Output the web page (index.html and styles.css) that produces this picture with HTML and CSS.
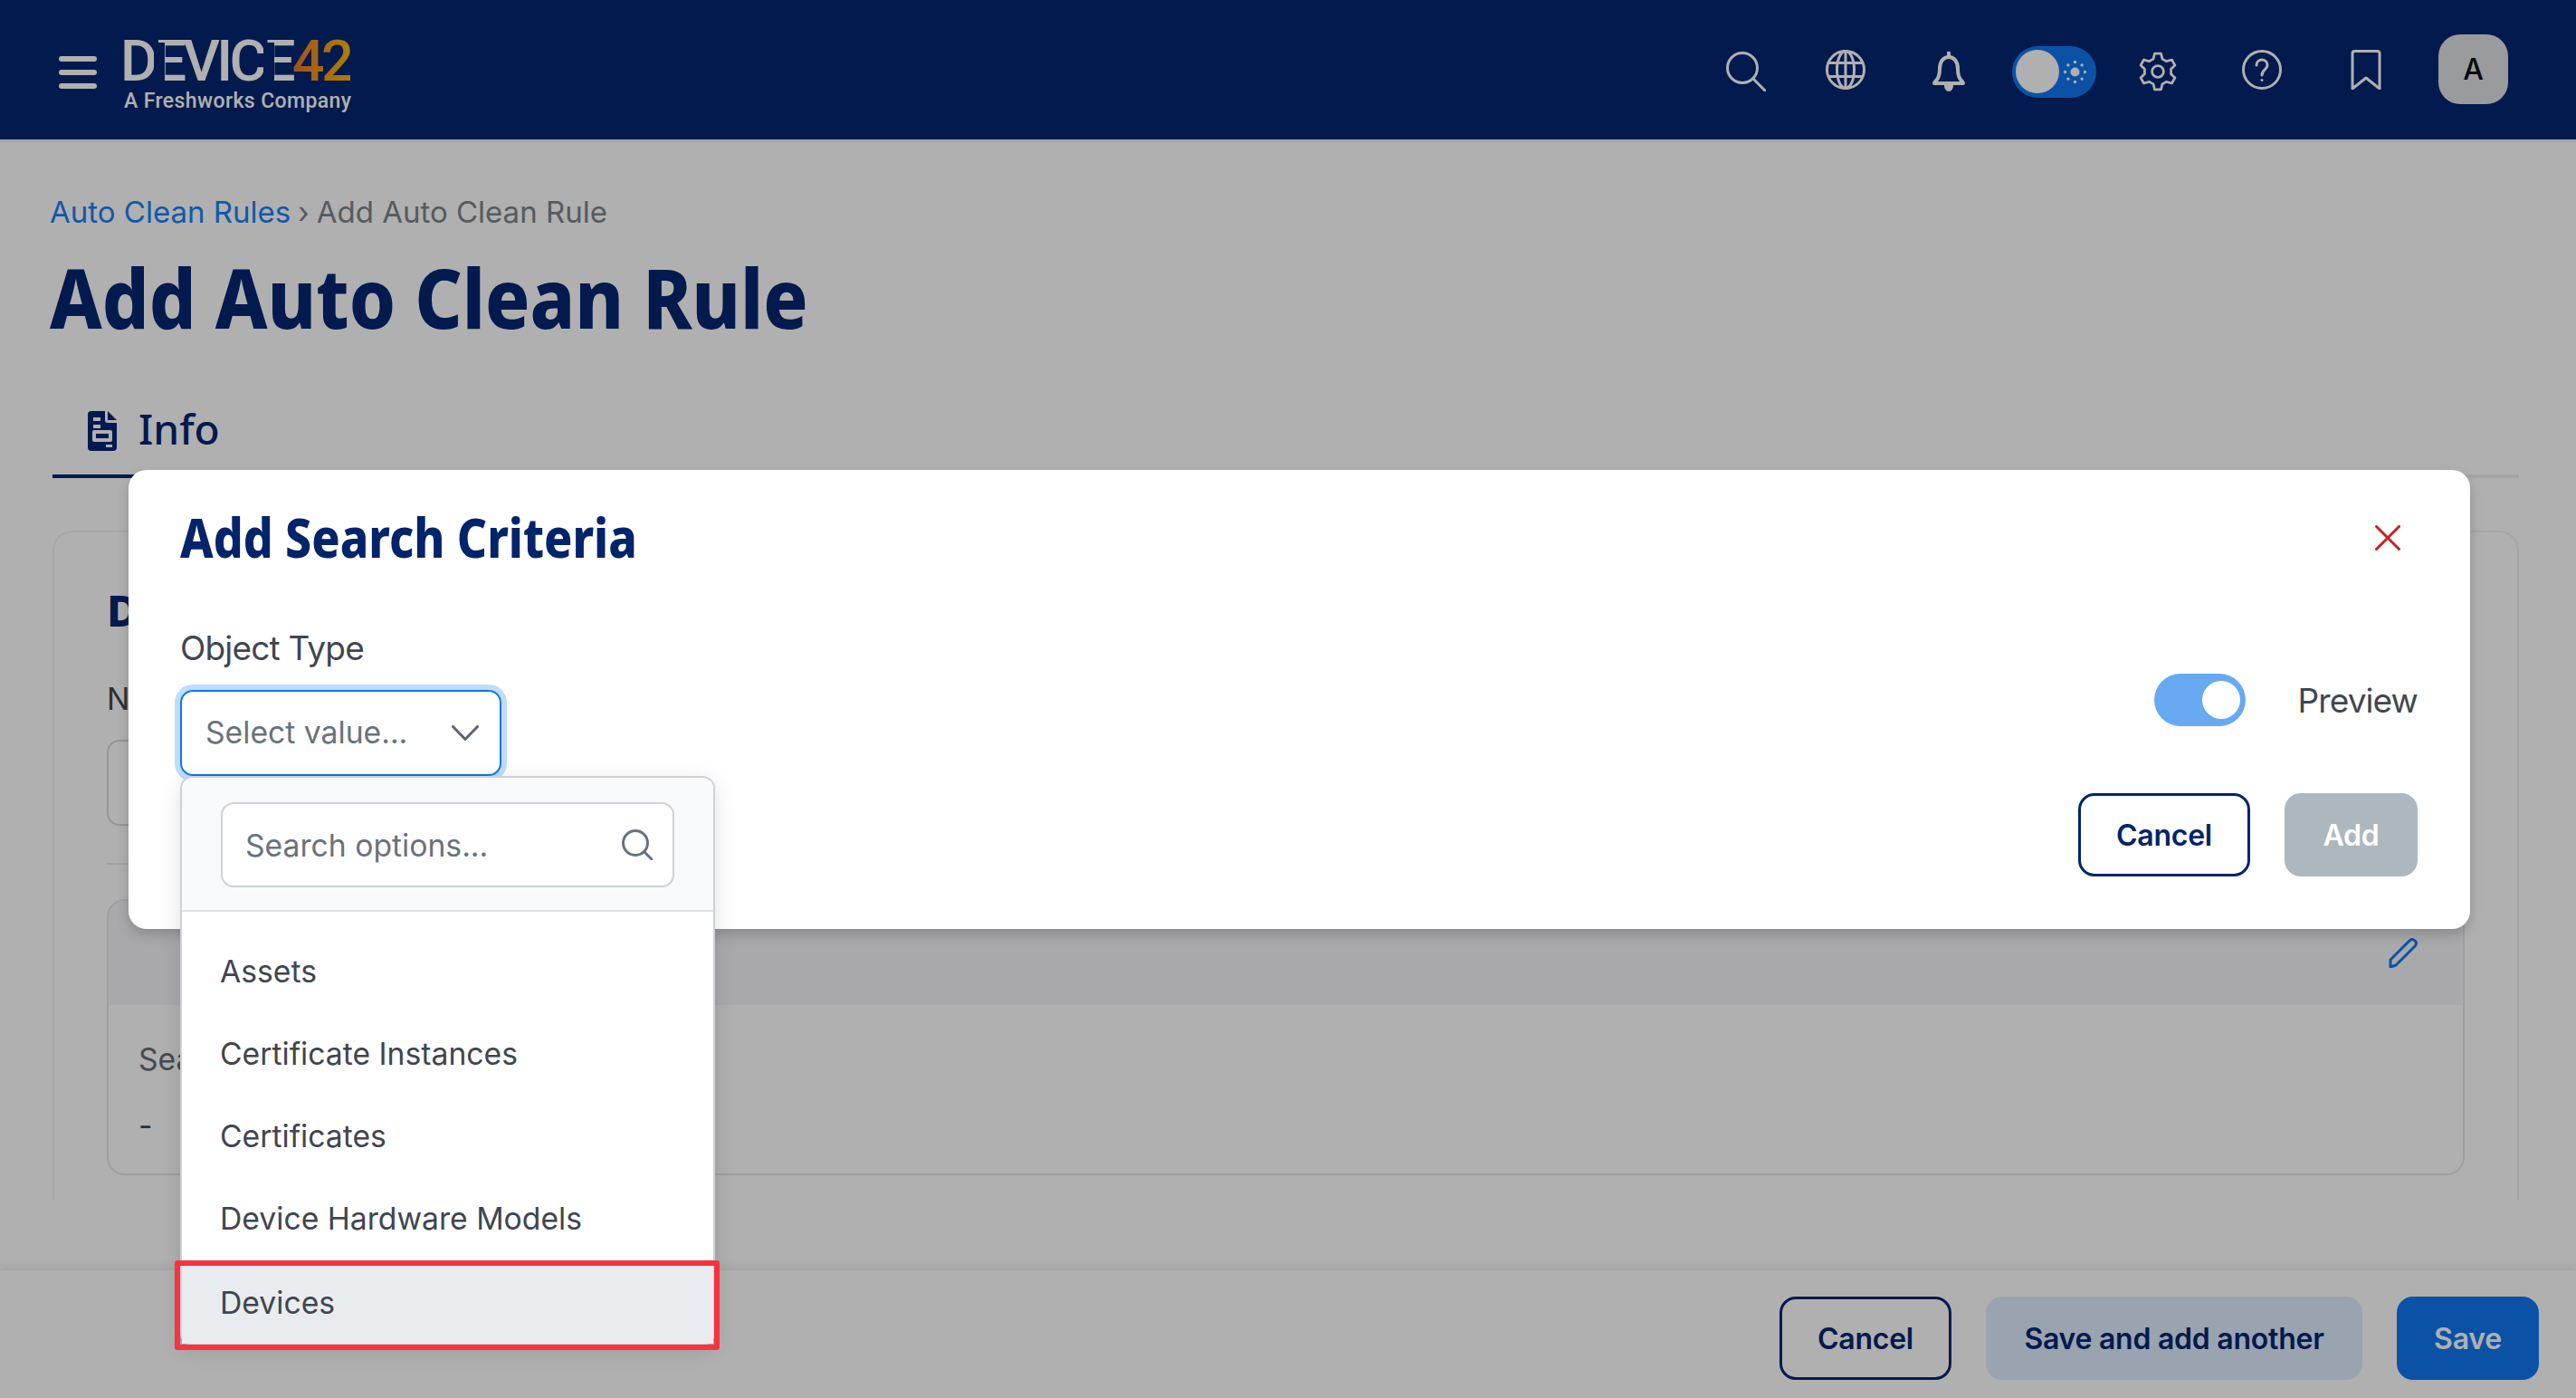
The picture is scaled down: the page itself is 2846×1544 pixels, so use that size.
FILE: index.html
```html
<!DOCTYPE html>
<html lang="en">
<head>
<meta charset="utf-8">
<title>Add Auto Clean Rule</title>
<link rel="stylesheet" href="styles.css">
</head>
<body>
<div class="app">
  <header class="topbar">
    <div class="brand">
      <div class="burger"><span></span><span></span><span></span></div>
      <div class="logo">
        <div class="wordmark">D<span class="bar-e">E</span>VIC<span class="bar-e">E</span><span class="num">42</span></div>
        <div class="tagline">A Freshworks Company</div>
      </div>
    </div>
    <nav class="tools">
      <svg class="ic ic-search" viewBox="0 0 44 44"><circle cx="18" cy="18" r="16.5"/><path d="M30 30 43 43"/></svg>
      <svg class="ic ic-globe" viewBox="0 0 44 44"><circle cx="22" cy="22" r="20.5"/><ellipse cx="22" cy="22" rx="9.5" ry="20.5"/><path d="M4 14.500H40M4 29.500H40M22 1.500V42.500"/></svg>
      <svg class="ic ic-bell" viewBox="0 0 40 44"><path d="M20 1v5M6 32c3-3 4-6 4-13 0-8 4-13 10-13s10 5 10 13c0 7 1 10 4 13 1 1 2 2 2 3H4c0-1 1-2 2-3Z"/><path class="solid" d="M15 37h10c0 4-2 7-5 7s-5-3-5-7Z"/></svg>
      <div class="theme">
        <span class="theme-knob"></span>
        <svg class="theme-sun" viewBox="0 0 32 32"><circle cx="16" cy="16" r="6"/><circle cx="16" cy="3" r="2"/><circle cx="16" cy="29" r="2"/><circle cx="3" cy="16" r="2"/><circle cx="29" cy="16" r="2"/><circle cx="7" cy="7" r="2"/><circle cx="25" cy="7" r="2"/><circle cx="7" cy="25" r="2"/><circle cx="25" cy="25" r="2"/></svg>
      </div>
      <svg class="ic ic-gear" viewBox="0 0 48 48"><path d="M18.530 8.960 20.180 2.330H27.820L29.470 8.960A16 16 0 0 1 34.280 11.740L40.850 9.860 44.670 16.480 39.760 21.220A16 16 0 0 1 39.760 26.780L44.670 31.520 40.850 38.140 34.280 36.260A16 16 0 0 1 29.470 39.040L27.820 45.670H20.180L18.530 39.040A16 16 0 0 1 13.720 36.260L7.150 38.140 3.330 31.520 8.240 26.780A16 16 0 0 1 8.240 21.220L3.330 16.480 7.150 9.860 13.720 11.740A16 16 0 0 1 18.530 8.960Z"/><circle cx="24" cy="24" r="7"/></svg>
      <svg class="ic ic-help" viewBox="0 0 44 44"><circle cx="22" cy="22" r="20.500"/><path d="M16 17c0-4 3-6 6-6s6 2 6 6c0 5-6 5-6 11"/><circle class="solid" cx="22" cy="33.500" r="1.500"/></svg>
      <svg class="ic ic-mark" viewBox="0 0 34 44"><path d="M2 43V4c0-1.500 1-2.500 2.500-2.500h25C31 1.500 32 2.500 32 4v39L17 31Z"/></svg>
      <div class="avatar">A</div>
    </nav>
  </header>

  <main class="content">
    <div class="crumbs"><a class="crumb-link">Auto Clean Rules</a> <span class="crumb-sep">›</span> <span>Add Auto Clean Rule</span></div>
    <h1 class="page-title">Add Auto Clean Rule</h1>
    <div class="tabs">
      <div class="tab">
        <svg class="tab-icon" viewBox="0 0 32 44"><path fill-rule="evenodd" d="M4 0H19V10a3 3 0 0 0 3 3H32V40a4 4 0 0 1-4 4H4a4 4 0 0 1-4-4V4a4 4 0 0 1 4-4ZM6 7V11H14V7ZM6 15V19H14V15ZM7 21a2 2 0 0 0-2 2V32a2 2 0 0 0 2 2H25a2 2 0 0 0 2-2V23a2 2 0 0 0-2-2ZM9 25H23V30H9ZM20 37V40H27V37ZM22 0 32 10H22Z"/></svg>
        <span class="tab-label">Info</span>
      </div>
    </div>
    <section class="card">
      <h2 class="card-title">Details</h2>
      <div class="field-label">Name</div>
      <div class="field-input"></div>
      <div class="card-rule"></div>
      <div class="criteria">
        <div class="criteria-band">
          <svg class="pencil" viewBox="0 0 32 33"><path d="M2 24 23 3c2-2 4-2 6 0s2 4 0 6L8 30l-6 2Z"/></svg>
        </div>
        <div class="criteria-body">
          <div class="criteria-label">Search Criteria</div>
          <div class="criteria-value">-</div>
        </div>
      </div>
    </section>
  </main>

  <footer class="footer">
    <button class="btn btn-outline-dim">Cancel</button>
    <button class="btn btn-soft">Save and add another</button>
    <button class="btn btn-primary">Save</button>
  </footer>

  <div class="scrim"></div>

  <div class="modal">
    <div class="modal-head">
      <h2 class="modal-title">Add Search Criteria</h2>
      <svg class="modal-close" viewBox="0 0 28 28"><path d="M1.500 1.500 26.500 26.500M26.500 1.500 1.500 26.500"/></svg>
    </div>
    <div class="modal-body">
      <div class="picker">
        <div class="picker-label">Object Type</div>
        <div class="select">
          <span class="select-value">Select value...</span>
          <svg class="chev" viewBox="0 0 30 17"><path d="M1.500 1.500 15 15.500 28.500 1.500"/></svg>
          <div class="dropdown">
            <div class="dd-head">
              <div class="dd-search">
                <span>Search options...</span>
                <svg class="dd-search-icon" viewBox="0 0 34 34"><circle cx="15" cy="15" r="13.500"/><path d="M25 25 33 33"/></svg>
              </div>
            </div>
            <ul class="dd-list">
              <li class="dd-item">Assets</li>
              <li class="dd-item">Certificate Instances</li>
              <li class="dd-item">Certificates</li>
              <li class="dd-item">Device Hardware Models</li>
              <li class="dd-item dd-item-active">Devices</li>
            </ul>
          </div>
        </div>
      </div>
      <div class="modal-side">
        <div class="preview">
          <span class="switch"><span class="switch-knob"></span></span>
          <span class="preview-label">Preview</span>
        </div>
        <div class="modal-actions">
          <button class="btn btn-outline">Cancel</button>
          <button class="btn btn-disabled">Add</button>
        </div>
      </div>
    </div>
  </div>
</div>
</body>
</html>
```
FILE: styles.css
```css
* { box-sizing: border-box; }
html, body { margin: 0; padding: 0; height: 100%; }
body { font-family: "Inter", "Liberation Sans", sans-serif; color: #3f4650; background: #fff; }
.app { position: relative; height: 1544px; display: flex; flex-direction: column; overflow: hidden; }

/* top bar */
.topbar { height: 157px; flex: none; background: #042670; display: flex; align-items: center; justify-content: space-between; padding: 0 75px 0 65px; border-bottom: 3px solid #f0f0f6; }
.brand { display: flex; align-items: flex-start; gap: 30px; }
.burger { display: flex; flex-direction: column; gap: 9px; width: 42px; margin-top: 33px; }
.burger span { height: 6px; border-radius: 3px; background: #fff; }
.logo { width: 252px; color: #fff; margin-top: 10px; margin-left: -4px; }
.wordmark { font-family: "Roboto", sans-serif; font-weight: 500; font-size: 63px; line-height: 58px; letter-spacing: -3.7px; white-space: nowrap; }
.bar-e { position: relative; display: inline-block; }
.bar-e::before { content: ""; position: absolute; left: 0; top: 8px; bottom: 8px; width: 12px; background: #042670; }
.num { background: linear-gradient(90deg, #e9762a, #f6b910); -webkit-background-clip: text; background-clip: text; color: transparent; }
.tagline { font-family: "Roboto", sans-serif; font-size: 23px; line-height: 26px; letter-spacing: .4px; font-weight: 500; white-space: nowrap; margin: 2px 0 0 4px; }
.tools { display: flex; align-items: center; margin-top: 4px; }
.ic { display: block; fill: none; stroke: #fff; stroke-width: 3; stroke-linecap: round; stroke-linejoin: round; }
.ic .solid { fill: #fff; stroke: none; }
.ic-search { width: 44px; height: 44px; margin-right: 66px; }
.ic-globe { width: 44px; height: 44px; margin-right: 72px; margin-top: -4px; }
.ic-bell { width: 40px; height: 44px; margin-right: 50px; stroke-width: 4; }
.theme { position: relative; width: 93px; height: 57px; border-radius: 29px; background: #1077f1; margin-right: 46px; }
.theme-knob { position: absolute; left: 4px; top: 4px; width: 48px; height: 48px; border-radius: 50%; background: #fff; }
.theme-sun { position: absolute; left: 56px; top: 15px; width: 27px; height: 27px; fill: #fff; }
.ic-gear { width: 44px; height: 44px; margin-right: 71px; }
.ic-help { width: 44px; height: 44px; margin-right: 76px; margin-top: -4px; }
.ic-mark { width: 34px; height: 44px; margin-right: 63px; margin-top: -4px; }
.avatar { width: 77px; height: 77px; border-radius: 24px; background: #dfe1e2; color: #111; display: flex; align-items: center; justify-content: center; font-size: 32px; font-weight: 500; margin-top: -6px; }

/* page */
.content { flex: 1; min-height: 0; display: flex; flex-direction: column; padding: 55px 63px 78px 58px; }
.crumbs { font-size: 33px; line-height: 44px; margin-left: -3px; color: #7b858d; white-space: nowrap; }
.crumb-link { color: #1a80f5; }
.crumb-sep { color: #7b858d; margin: 0 -1.4px; }
.page-title { margin: 17px 0 0 -3px; font-family: "Noto Sans", sans-serif; font-weight: 800; font-size: 91px; line-height: 110px; color: #042670; white-space: nowrap; transform: scaleX(.896); transform-origin: left center; }
.tabs { margin-top: 50px; height: 95px; border-bottom: 4px solid #eef0f3; display: flex; flex: none; }
.tab { display: flex; align-items: center; gap: 24px; padding: 0 39px 6px; height: 95px; border-bottom: 4px solid #042670; font-family: "Noto Sans", sans-serif; font-size: 46px; font-weight: 500; color: #042670; }
.tab-label { margin-bottom: 6px; }
.tab-icon { width: 32px; height: 44px; fill: #042670; }
.card { flex: 1; min-height: 0; margin-top: 58px; border: 2px solid #f0f1f4; border-bottom: 0; border-radius: 22px 22px 0 0; padding: 62px 58px 0 58px; }
.card-title { margin: 0; font-family: "Noto Sans", sans-serif; font-weight: 800; font-size: 48px; line-height: 48px; color: #042670; }
.field-label { margin-top: 52px; font-size: 33.7px; line-height: 44px; }
.field-input { margin-top: 23px; height: 95px; width: 1000px; border: 2px solid #d7dade; border-radius: 14px; }
.card-rule { margin-top: 41px; height: 2px; background: #e9ebee; }
.criteria { margin-top: 38px; height: 305px; border: 2px solid #e6e7ea; border-radius: 20px; overflow: hidden; }
.criteria-band { height: 115px; background: #f5f5f8; display: flex; justify-content: flex-end; align-items: flex-start; padding: 41px 50px 0 0; }
.pencil { width: 32px; height: 33px; fill: none; stroke: #1077f1; stroke-width: 3; stroke-linejoin: round; }
.criteria-body { padding: 38px 33px; font-size: 33.7px; }
.criteria-label { line-height: 44px; color: #636c75; }
.criteria-value { margin-top: 29px; line-height: 44px; }

/* footer */
.footer { height: 141px; flex: none; display: flex; justify-content: flex-end; gap: 38px; padding: 29px 41px 0 0; box-shadow: 0 -4px 8px rgba(20, 30, 60, .09); background: #fff; position: relative; }
.btn { font-family: "Inter", sans-serif; font-weight: 600; font-size: 32px; letter-spacing: -.25px; height: 92px; border-radius: 18px; border: 0; padding: 0; display: block; }
.footer .btn-outline-dim { width: 190px; background: #fff; border: 3px solid #042670; color: #042670; }
.btn-soft { width: 416px; background: #dfeeff; color: #042670; }
.btn-primary { width: 157px; background: #1077f1; color: #fff; }

/* overlay */
.scrim { position: absolute; inset: 0; background: rgba(0, 0, 0, .31); }
.modal { position: absolute; left: 142px; top: 519px; width: 2587px; height: 507px; background: #fff; border-radius: 20px; box-shadow: 0 6px 14px rgba(0, 0, 0, .18); padding: 44px 58px 0 57px; }
.modal-head { display: flex; justify-content: space-between; align-items: center; height: 60px; }
.modal-title { margin: 0; font-family: "Noto Sans", sans-serif; font-weight: 800; font-size: 60px; line-height: 60px; color: #01246b; white-space: nowrap; transform: scaleX(.863); transform-origin: left center; }
.modal-close { width: 28px; height: 28px; margin: 2px 19px 0 0; fill: none; stroke: #cc1f1f; stroke-width: 3; stroke-linecap: round; }
.modal-body { margin-top: 71px; display: flex; justify-content: space-between; }
.picker-label { font-size: 37px; line-height: 44px; letter-spacing: -.8px; color: #3f4650; }
.select { position: relative; margin-top: 24px; width: 355px; height: 95px; border: 2px solid #0a78e6; border-radius: 14px; box-shadow: 0 0 0 6px #bfdcfd; display: flex; align-items: center; justify-content: space-between; padding: 0 23px 0 26px; font-size: 33.7px; color: #68727c; }
.select-value { margin-top: -2px; }
.chev { width: 30px; height: 17px; fill: none; stroke: #5b6570; stroke-width: 3; stroke-linecap: round; stroke-linejoin: round; }
.dropdown { position: absolute; left: -2px; top: 93px; width: 591px; height: 629px; background: #fff; border: 2px solid #ccd2d8; border-radius: 14px; box-shadow: 0 6px 24px rgba(0, 0, 0, .12); z-index: 2; }
.dd-head { height: 148px; background: #f8f9fa; border-bottom: 2px solid #dee2e6; padding: 27px 43px; border-radius: 12px 12px 0 0; }
.dd-search { height: 94px; background: #fff; border: 2px solid #ccd2d8; border-radius: 14px; display: flex; align-items: center; justify-content: space-between; padding: 0 22px 0 25px; }
.dd-search-icon { width: 34px; height: 34px; fill: none; stroke: #68727c; stroke-width: 3; stroke-linecap: round; }
.dd-list { list-style: none; margin: 0; padding: 20px 0 0; }
.dd-item { height: 91px; display: flex; align-items: center; padding-left: 42px; color: #3f4650; }
.dd-item-active { position: relative; background: #e9ecef; height: 86px; margin-top: 7px; padding-bottom: 6px; }
.dd-item-active::after { content: ""; position: absolute; left: -8px; right: -7px; top: -6px; bottom: -7px; border: 6px solid #f8333f; border-radius: 3px; }
.modal-side { padding-top: 50px; display: flex; flex-direction: column; align-items: flex-end; }
.preview { display: flex; align-items: center; gap: 58px; height: 58px; }
.switch { position: relative; display: block; width: 101px; height: 58px; border-radius: 29px; background: #67aaf1; }
.switch-knob { position: absolute; right: 6px; top: 8px; width: 42px; height: 42px; border-radius: 50%; background: #fff; }
.preview-label { font-size: 37px; letter-spacing: -.9px; color: #3f4650; }
.modal-actions { margin-top: 74px; display: flex; gap: 38px; }
.btn-outline { width: 190px; background: #fff; border: 3px solid #01246b; color: #01246b; }
.btn-disabled { width: 147px; background: #adb8be; color: #fff; }
```
